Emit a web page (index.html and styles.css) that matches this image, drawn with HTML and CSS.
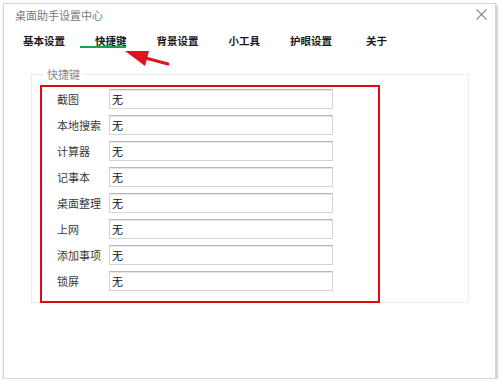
FILE: index.html
```html
<!DOCTYPE html>
<html lang="zh-CN">
<head>
    <meta charset="UTF-8">
    <title>桌面助手设置中心</title>
    <link rel="stylesheet" href="styles.css">
</head>
<body>
    <!-- Settings window -->
    <div class="window">
        <div class="titlebar">
            <span class="title">桌面助手设置中心</span>
            <svg class="close" width="11" height="11" viewBox="0 0 11 11">
                <path d="M0.5 0.5 L10.5 10.5 M10.5 0.5 L0.5 10.5" stroke="#8a8a8a" stroke-width="1.1" fill="none"/>
            </svg>
        </div>

        <!-- Tabs -->
        <div class="tabs">
            <span class="tab">基本设置</span>
            <span class="tab active">快捷键</span>
            <span class="tab">背景设置</span>
            <span class="tab">小工具</span>
            <span class="tab">护眼设置</span>
            <span class="tab">关于</span>
        </div>

        <!-- Annotation arrow pointing at the active tab -->
        <svg class="arrow" width="60" height="30" viewBox="0 0 60 30">
            <path d="M22 14 L52 22" stroke="#e0141e" stroke-width="3" stroke-linecap="round"/>
            <polygon points="9,9 33,9 29,24" fill="#e0141e"/>
        </svg>

        <fieldset class="group">
            <legend>快捷键</legend>
            <div class="highlight">
                <div class="row"><label>截图</label><input type="text" value="无" readonly></div>
                <div class="row"><label>本地搜索</label><input type="text" value="无" readonly></div>
                <div class="row"><label>计算器</label><input type="text" value="无" readonly></div>
                <div class="row"><label>记事本</label><input type="text" value="无" readonly></div>
                <div class="row"><label>桌面整理</label><input type="text" value="无" readonly></div>
                <div class="row"><label>上网</label><input type="text" value="无" readonly></div>
                <div class="row"><label>添加事项</label><input type="text" value="无" readonly></div>
                <div class="row"><label>锁屏</label><input type="text" value="无" readonly></div>
            </div>
        </fieldset>
    </div>
</body>
</html>
```

FILE: styles.css
```css
/* Page */
body {
    margin: 0;
    background: #ffffff;
    font-family: "Noto Sans CJK SC", "Microsoft YaHei", sans-serif;
    font-size: 11px;
    color: #333;
}

/* Window frame */
.window {
    position: relative;
    box-sizing: border-box;
    width: 493px;
    height: 376px;
    margin: 3px 0 0 3px;
    background: #fff;
    border: 1px solid #d6d6d6;
    box-shadow: 1px 2px 3px rgba(0, 0, 0, 0.3);
}

/* Title bar */
.titlebar {
    display: flex;
    justify-content: space-between;
    align-items: center;
    height: 21px;
    padding: 0 8px 0 11px;
}

.title {
    color: #7a7a7a;
    font-size: 11px;
}

/* Tab strip */
.tabs {
    display: flex;
    gap: 30px;
    padding-left: 19px;
}

.tab {
    position: relative;
    padding-top: 6px;
    line-height: 20px;
    height: 23px;
    box-sizing: border-box;
    font-size: 10.5px;
    font-weight: bold;
    color: #1a1a1a;
}

.tab:last-child {
    margin-left: 4px;
}

.tab.active::after {
    content: "";
    position: absolute;
    left: -15px;
    bottom: 0;
    width: 46px;
    height: 2px;
    background: #19a34a;
}

/* Red annotation arrow */
.arrow {
    position: absolute;
    left: 112px;
    top: 38px;
}

/* Group box */
.group {
    margin: 19px 0 0 27px;
    padding: 0;
    width: 438px;
    box-sizing: border-box;
    border: 1px solid #ececec;
}

.group legend {
    margin-left: 12px;
    padding: 0 3px;
    line-height: 14px;
    color: #8a8a8a;
}

/* Red highlight frame */
.highlight {
    display: flex;
    flex-direction: column;
    gap: 6px;
    width: 340px;
    box-sizing: border-box;
    margin: 4px 0 -1px 8px;
    padding: 2px 0 10px 15px;
    border: 2px solid #e00a12;
}

.row {
    display: flex;
    align-items: center;
    height: 20px;
}

.row label {
    width: 52px;
    color: #3a3a3a;
}

.row input {
    width: 224px;
    height: 20px;
    box-sizing: border-box;
    margin: 0;
    padding: 0 2px;
    font-family: inherit;
    font-size: 11px;
    color: #111;
    border: 1px solid #d4d4d4;
    border-top-color: #b8b8b8;
    box-shadow: inset 0 1px 0 #e6e6e6;
    outline: none;
}
```
